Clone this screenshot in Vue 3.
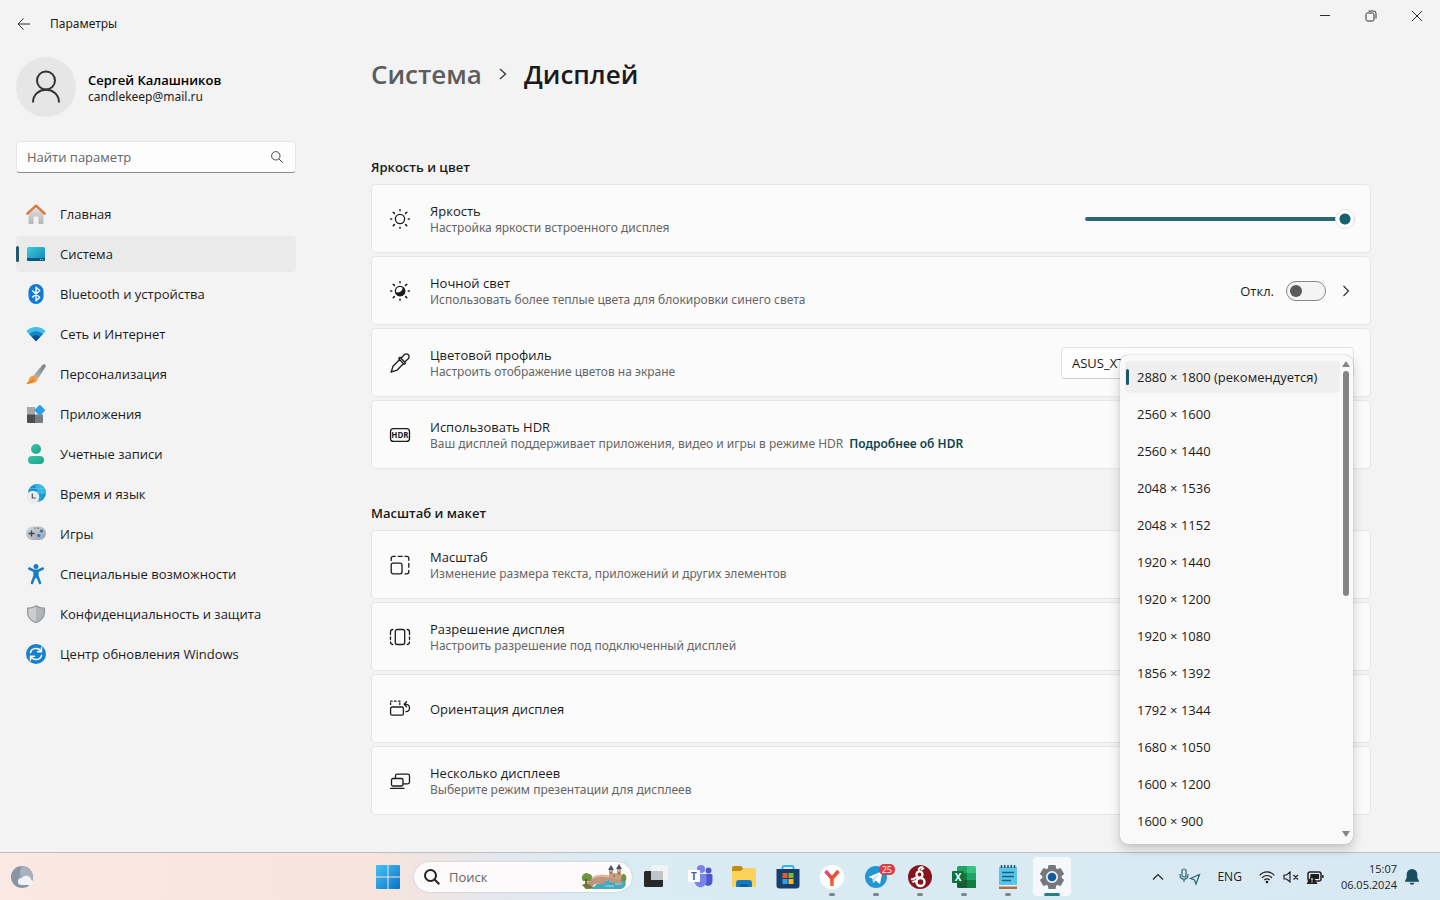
<script setup>
import { ref } from 'vue'

const query = ref('')
const taskQuery = ref('')
const brightness = ref(100)
const nightLight = ref(false)
const profile = ref('ASUS_XT')
const resolution = ref('2880 × 1800 (рекомендуется)')

const resolutions = [
  '2880 × 1800 (рекомендуется)', '2560 × 1600', '2560 × 1440', '2048 × 1536', '2048 × 1152',
  '1920 × 1440', '1920 × 1200', '1920 × 1080', '1856 × 1392', '1792 × 1344', '1680 × 1050',
  '1600 × 1200', '1600 × 900',
]

const nav = [
  { label: 'Главная', icon: `<defs><linearGradient id="hm" x2="0" y2="1"><stop stop-color="#e4e4e4"/><stop offset="1" stop-color="#b5b5b5"/></linearGradient></defs><path d="M2.500 8.500 10 2l7.500 6.500V19a1 1 0 0 1-1 1h-4v-6.500a1 1 0 0 0-1-1h-3a1 1 0 0 0-1 1V20h-4a1 1 0 0 1-1-1z" fill="url(#hm)"/><path d="M1.300 9.700 10 1.700l8.700 8" fill="none" stroke="#d9783a" stroke-width="2.400" stroke-linecap="round" stroke-linejoin="round"/>` },
  { label: 'Система', active: true, icon: `<defs><linearGradient id="sy" x2="1" y2="1"><stop stop-color="#3ccbdc"/><stop offset="1" stop-color="#1583b8"/></linearGradient></defs><rect x="1" y="3" width="18" height="14" rx="1.500" fill="url(#sy)"/><path d="M1 14h18v1.500a1.500 1.500 0 0 1-1.500 1.500h-15A1.500 1.500 0 0 1 1 15.500z" fill="#0c5683"/><path d="M14 15.500h1m1 0h1" stroke="#8fdcf0"/>` },
  { label: 'Bluetooth и устройства', icon: `<rect x="2.500" y="0" width="15" height="20" rx="7.500" fill="#1079dc"/><path d="m6.300 6.500 7.400 7-3.700 3.300V3.200l3.700 3.300-7.400 7" fill="none" stroke="#fff" stroke-width="1.400" stroke-linejoin="round"/>` },
  { label: 'Сеть и Интернет', icon: `<path d="M.300 7.300C5.500 1.500 14.500 1.500 19.700 7.300L10 17.300z" fill="#43bfe9"/><path d="M3.200 10.300c3.700-4 9.900-4 13.600 0L10 17.300z" fill="#1582c8"/><path d="M6 13.100c2-2.400 6-2.400 8 0l-4 4.200z" fill="#0c4f96"/>` },
  { label: 'Персонализация', icon: `<defs><linearGradient id="br" x1="1" x2="0" y2="1"><stop stop-color="#767b80"/><stop offset="1" stop-color="#b6bbc0"/></linearGradient></defs><path d="M7.500 11.500 16.500.900c1.500-1.600 4 .2 3 2.200L12 14.800z" fill="url(#br)"/><path d="M11.500 14.800c-.5 4-4.500 5-10.700 4.600 2-1 1.500-3.100 2.600-5.200 1.200-2.400 4-3.100 5.800-2z" fill="#f19a38"/><path d="M.800 19.400c3-.3 5.500-1.800 6.200-4" fill="none" stroke="#dd7321" stroke-width="1.200"/>` },
  { label: 'Приложения', icon: `<path d="M1 3h8v8H1z" fill="#a4a6a8"/><path d="M1 10.500h8V19H2a1 1 0 0 1-1-1z" fill="#4c4e50"/><path d="M9 10.500h8V18a1 1 0 0 1-1 1H9z" fill="#797c7f"/><rect x="9.800" y="2.200" width="8" height="8" rx="1" fill="#2b9ee6" transform="rotate(45 13.800 6.200)"/>` },
  { label: 'Учетные записи', icon: `<defs><linearGradient id="ac" x2="1" y2="1"><stop stop-color="#39c6a2"/><stop offset="1" stop-color="#1ba18c"/></linearGradient></defs><circle cx="10" cy="5" r="5" fill="url(#ac)"/><rect x="2" y="12" width="16" height="8" rx="4" fill="url(#ac)"/>` },
  { label: 'Время и язык', icon: `<circle cx="11" cy="9" r="9" fill="#1592cf"/><path d="M11 0c5 0 9 4 9 9h-9c0-4-1-6-3-8.500z" fill="#36b3df"/><path d="M4 4.500h15M3 9h17M13 .500c4 5 4 12 0 17" stroke="#6bd0ed" fill="none" stroke-width=".500"/><circle cx="6.800" cy="13.200" r="6.500" fill="#e9ebed"/><path d="M6.300 9.500v4.500h3.500" fill="none" stroke="#50565c" stroke-width="1.200"/>` },
  { label: 'Игры', icon: `<defs><linearGradient id="gm" x2="1" y2="1"><stop stop-color="#d6d9df"/><stop offset="1" stop-color="#9ba1ad"/></linearGradient></defs><rect x="0" y="2.500" width="20" height="13.500" rx="6.500" fill="url(#gm)"/><path d="M5.500 6.500v6M2.500 9.500h6" stroke="#3e4349" stroke-width="1.300"/><circle cx="15.500" cy="7" r="1.600" fill="#2973b9"/><circle cx="12.800" cy="11.500" r="1.600" fill="#2973b9"/><path d="M8.500 4.200h1m2 0h1" stroke="#444" stroke-width="1.200"/>` },
  { label: 'Специальные возможности', icon: `<circle cx="10" cy="2.500" r="2.500" fill="#197dc5"/><path d="M3.200 4.500 8 6.800h4l4.800-2.300M8.600 7v5L6 19M11.400 7v5l2.600 7M10 7v6" fill="none" stroke="#197dc5" stroke-width="2.500" stroke-linecap="round" stroke-linejoin="round"/>` },
  { label: 'Конфиденциальность и защита', icon: `<path d="M10 1c3 2 6 2.500 9 2.500v5c0 5-3.800 9-9 10.800C4.800 17.500 1 13.500 1 8.500v-5C4 3.500 7 3 10 1z" fill="#94989c"/><path d="M10 2.500c2.500 1.500 5 2 7.700 2.200v4c0 4-3 7.400-7.700 9.100z" fill="#b2b5b8"/><path d="M10 2.500C7.500 4 5 4.500 2.300 4.700v4c0 4 3 7.400 7.700 9.100z" fill="#cbcdcf"/>` },
  { label: 'Центр обновления Windows', icon: `<circle cx="10" cy="10" r="10" fill="#1780cd"/><path d="M4.500 8.700C5.500 3.700 12.800 3 15 7.500M15.500 3.800v4h-4M15.500 11.300C14.500 16.300 7.200 17 5 12.500m-.500 3.700v-4h4" fill="none" stroke="#fff" stroke-width="1.500" stroke-linecap="round" stroke-linejoin="round"/>` },
]

const rays = '<path d="M10 .700v1M10 18.300v1M.700 10h1M18.300 10h1M3.200 3.200l1.200 1.200M15.600 15.600l1.200 1.200M3.200 16.800l1.200-1.200M15.600 4.400l1.200-1.200" stroke-width="1.500"/>'
const colorRows = [
  { key: 'brightness', title: 'Яркость', text: 'Настройка яркости встроенного дисплея', icon: `<circle cx="10" cy="10" r="4.600"/>${rays}` },
  { key: 'night', title: 'Ночной свет', text: 'Использовать более теплые цвета для блокировки синего света', icon: `<circle cx="10" cy="10" r="4.600"/>${rays}<path d="M13.300 6.700A4.600 4.600 0 1 1 6 12c4 .500 7-1.500 7.300-5.300z" fill="#1b1b1b"/>` },
  { key: 'profile', title: 'Цветовой профиль', text: 'Настроить отображение цветов на экране', icon: `<path d="m11 5.300 3-3.300c3-3 7 1 4 4l-3.300 3M10 4.300l5.700 5.700-1.500 1.200-5.500-5.500zM9.700 6.500 3 13.200 1.500 18 1 19.200l1.200-.5L7 17.200l6.500-6.700"/>` },
  { key: 'hdr', title: 'Использовать HDR', text: 'Ваш дисплей поддерживает приложения, видео и игры в режиме HDR', icon: `<rect x=".500" y="3.600" width="19" height="12.800" rx="3"/><text x="10" y="13" text-anchor="middle" font-family="Open Sans, sans-serif" font-size="8" font-weight="700" fill="#1b1b1b" stroke="none">HDR</text>` },
]
const layoutRows = [
  { key: 'scale', title: 'Масштаб', text: 'Изменение размера текста, приложений и других элементов', icon: `<rect x="1.200" y="8.200" width="10.800" height="10.600" rx="2"/><path d="M1.200 5.500V3.300a2 2 0 0 1 2-2h2M8.200 1.300h4M15 1.300h1.800a2 2 0 0 1 2 2v2M18.800 8.300v4M18.800 15.500v1.300a2 2 0 0 1-2 2H15"/>` },
  { key: 'resolution', title: 'Разрешение дисплея', text: 'Настроить разрешение под подключенный дисплей', icon: `<rect x="5.300" y="2.500" width="9.400" height="15" rx="2"/><path d="M2.800 2.500a2.500 2.500 0 0 0-2.300 2.500v2.500M.500 10v2.500M2.800 17.500A2.500 2.500 0 0 1 .500 15M17.200 2.500A2.500 2.500 0 0 1 19.500 5v2.500M19.500 10v2.500M17.200 17.500a2.500 2.500 0 0 0 2.300-2.500"/>` },
  { key: 'orientation', title: 'Ориентация дисплея', text: '', icon: `<rect x=".600" y="8" width="12.800" height="8.200" rx="1.500"/><path d="M.600 5.500V4M.600 2.200h1.500M4.500 2.200H6M8.500 2.200h1.500M9.800 4v1.500M14.500 5.200h1c5.500.500 5 7 .5 7.500M16.500 2.800 14.200 5.200l2.300 2.500"/>` },
  { key: 'multi', title: 'Несколько дисплеев', text: 'Выберите режим презентации для дисплеев', icon: `<rect x="1.500" y="7.500" width="11.500" height="7.500" rx="1.500"/><path d="M5.500 7V5a1.800 1.800 0 0 1 1.800-1.800h10.400A1.800 1.800 0 0 1 19.500 5v6a1.800 1.800 0 0 1-1.800 1.800h-4.500M.500 17.300h13.500"/>` },
]

const apps = [
  { name: 'Представление задач', icon: `<rect x="0" y="6" width="19" height="16" rx="1.500" fill="#26282a"/><rect x="7" y="0" width="17" height="15" rx="1.500" fill="#f2f4f6" opacity=".880"/><path d="M7 6h12v9H7z" fill="#c2c5c8"/>` },
  { name: 'Teams', icon: `<circle cx="13" cy="4" r="4" fill="#7b83eb"/><circle cx="20.500" cy="5.500" r="3" fill="#5059c9"/><path d="M16 9h7a1.500 1.500 0 0 1 1.500 1.500V16c0 5-5 6.500-8 3z" fill="#5059c9"/><path d="M6.500 9h12v6.500c0 9-12 9-12 0z" fill="#7b83eb"/><rect x="0" y="5" width="12" height="12" rx="1" fill="#fff"/><text x="6" y="14.500" text-anchor="middle" font-family="Open Sans, sans-serif" font-size="10" font-weight="700" fill="#4b53bc">T</text>` },
  { name: 'Проводник', icon: `<path d="M0 3a2 2 0 0 1 2-2h7l3 3h10v6H0z" fill="#c68b12"/><path d="M0 6h9l2.500-3H22.500A1.500 1.500 0 0 1 24 4.500V21a1 1 0 0 1-1 1H1a1 1 0 0 1-1-1z" fill="#fbd35c"/><path d="M4 22v-4a3 3 0 0 1 3-3h10a3 3 0 0 1 3 3v4z" fill="#1779c1"/><path d="M8 19h8v3H8z" fill="#0f5f9f"/>` },
  { name: 'Microsoft Store', icon: `<path d="M6.500 5V2.500A1.500 1.500 0 0 1 8 1h8a1.500 1.500 0 0 1 1.500 1.500V5" fill="none" stroke="#38b6ed" stroke-width="2"/><path d="M.500 4h23v16.500a3 3 0 0 1-3 3h-17a3 3 0 0 1-3-3z" fill="#173e70"/><path d="M6.500 8h5v5h-5z" fill="#f2542d"/><path d="M12.500 8h5v5h-5z" fill="#7fba28"/><path d="M6.500 14h5v5h-5z" fill="#26a5e8"/><path d="M12.500 14h5v5h-5z" fill="#fdbb2c"/>` },
  { name: 'Яндекс', open: true, icon: `<defs><linearGradient id="ya" x2="1" y2="1"><stop stop-color="#e34691"/><stop offset=".450" stop-color="#e84b35"/><stop offset="1" stop-color="#f58a2b"/></linearGradient></defs><circle cx="12" cy="12" r="12" fill="#fff"/><path d="m5.500 6 6.500 7.500L18.500 6M12 13v8" fill="none" stroke="url(#ya)" stroke-width="3.600"/>` },
  { name: 'Telegram', open: true, badge: '25', icon: `<circle cx="12" cy="12" r="11" fill="#2397d4"/><path d="m4.500 12 14-6-2.500 13-4.500-3.500-2.500 2.500-.500-4.500z" fill="#fff"/><path d="m9 13.500 7-5.300-5 6-2 3.300z" fill="#b9d9ed"/>` },
  { name: 'Вики', open: true, icon: `<circle cx="12" cy="12" r="12" fill="#85161f"/><circle cx="11.500" cy="9.500" r="3" fill="none" stroke="#fff" stroke-width="2.200"/><circle cx="12.500" cy="17" r="4" fill="none" stroke="#fff" stroke-width="2.400"/><path d="M12 6.500c-3-2 0-5 3-4M13 5l3-2M3 14c3 1 5-1 7-3M4.500 17.500c1.500-2 3.500-1.500 4-.500" fill="none" stroke="#fff" stroke-width="2"/>` },
  { name: 'Excel', open: true, icon: `<path d="M5 2.500A1.500 1.500 0 0 1 6.500 1H15v8H5z" fill="#21a366"/><path d="M15 1h7.500A1.500 1.500 0 0 1 24 2.500V9h-9z" fill="#33c481"/><path d="M5 8h10v7H5z" fill="#107c41"/><path d="M15 8h9v7h-9z" fill="#21a366"/><path d="M5 15h19v6.500a1.500 1.500 0 0 1-1.500 1.500h-16A1.500 1.500 0 0 1 5 21.500z" fill="#185c37"/><path d="M15 15h9v6.500a1.500 1.500 0 0 1-1.500 1.500H15z" fill="#107c41"/><rect x="0" y="6" width="12" height="12" rx="1" fill="#0e7039"/><text x="6" y="15.500" text-anchor="middle" font-family="Open Sans, sans-serif" font-size="10" font-weight="700" fill="#fff">X</text>` },
  { name: 'Блокнот', open: true, icon: `<path d="M3 2h18v18H3z" fill="#5cc3e6"/><path d="M3 21h18v3H3z" fill="#b06d48"/><path d="M3 20h18v1.500H3z" fill="#eaf4f7"/><path d="M5.500 0v3M8.700 0v3M12 0v3M15.300 0v3M18.500 0v3" stroke="#174f6c" stroke-width="1.500"/><path d="M6 7.500h12M6 11.500h12M6 15.500h9" stroke="#126390" stroke-width="1.300"/>` },
  { name: 'Параметры', open: true, active: true, icon: `<g fill="#75797d"><circle cx="12" cy="12" r="9.500"/><path d="M8.500 0h7l1 5h-9zM8.500 24h7l1-5h-9z"/><path d="M8.500 0h7l1 5h-9zM8.500 24h7l1-5h-9z" transform="rotate(60 12 12)"/><path d="M8.500 0h7l1 5h-9zM8.500 24h7l1-5h-9z" transform="rotate(120 12 12)"/></g><circle cx="12" cy="12" r="6" fill="#eceff1"/><circle cx="12" cy="12" r="4.300" fill="#125b9d"/>` },
]
</script>

<template>
  <div class="desktop">
    <header class="titlebar">
      <button class="back" aria-label="Назад">
        <svg width="14" height="14" viewBox="0 0 14 14"><path d="M13 7H1.500M6.500 1.500 1 7l5.500 5.500" /></svg>
      </button>
      <span class="app-title">Параметры</span>
      <div class="window-buttons">
        <button aria-label="Свернуть"><svg width="12" height="12" viewBox="0 0 12 12"><path d="M1 5.500h10" /></svg></button>
        <button aria-label="Свернуть в окно"><svg width="12" height="12" viewBox="0 0 12 12"><rect x="1" y="3" width="8" height="8" rx="1.500" /><path d="M3.500 1H8.500A2.500 2.500 0 0 1 11 3.500V8.500" /></svg></button>
        <button aria-label="Закрыть"><svg width="12" height="12" viewBox="0 0 12 12"><path d="m1 1 10 10M11 1 1 11" /></svg></button>
      </div>
    </header>

    <div class="body">
      <aside class="sidebar">
        <button class="account">
          <span class="avatar">
            <svg width="32" height="32" viewBox="0 0 32 32"><circle cx="16" cy="9.500" r="9" /><path d="M3 31.500c0-17 26-17 26 0" /></svg>
          </span>
          <span class="account-text"><strong>Сергей Калашников</strong><span>candlekeep@mail.ru</span></span>
        </button>
        <label class="search">
          <input v-model="query" type="text" placeholder="Найти параметр" aria-label="Найти параметр">
          <svg width="12" height="12" viewBox="0 0 12 12"><circle cx="4.800" cy="4.800" r="4.200" /><path d="m8 8 3.700 3.700" /></svg>
        </label>
        <nav>
          <a v-for="item in nav" :key="item.label" href="#" class="nav-item" :class="{ active: item.active }">
            <svg width="20" height="20" viewBox="0 0 20 20" v-html="item.icon" />
            <span>{{ item.label }}</span>
          </a>
        </nav>
      </aside>

      <main>
        <h1>
          <a href="#">Система</a>
          <svg width="8" height="14" viewBox="0 0 8 14"><path d="m1 2 5.500 5L1 12" /></svg>
          <span>Дисплей</span>
        </h1>

        <section>
          <h2>Яркость и цвет</h2>
          <div v-for="row in colorRows" :key="row.key" class="card">
            <svg class="line-icon" width="20" height="20" viewBox="0 0 20 20" v-html="row.icon" />
            <div class="card-text">
              <div class="card-title">{{ row.title }}</div>
              <div class="card-note">{{ row.text }}<a v-if="row.key === 'hdr'" href="#">Подробнее об HDR</a></div>
            </div>
            <input v-if="row.key === 'brightness'" v-model="brightness" class="slider" type="range" min="0" max="100" aria-label="Яркость">
            <template v-else-if="row.key === 'night'">
              <label class="toggle">Откл.<input v-model="nightLight" type="checkbox"></label>
              <button class="expand" aria-label="Ночной свет: подробнее">
                <svg width="8" height="12" viewBox="0 0 8 12"><path d="m1.500 1 5 5-5 5" /></svg>
              </button>
            </template>
            <select v-else-if="row.key === 'profile'" v-model="profile" class="combo" aria-label="Цветовой профиль">
              <option>ASUS_XT</option>
            </select>
          </div>
        </section>

        <section>
          <h2>Масштаб и макет</h2>
          <div v-for="row in layoutRows" :key="row.key" class="card">
            <svg class="line-icon" width="20" height="20" viewBox="0 0 20 20" v-html="row.icon" />
            <div class="card-text">
              <div class="card-title">{{ row.title }}</div>
              <div v-if="row.text" class="card-note">{{ row.text }}</div>
            </div>
            <div v-if="row.key === 'resolution'" class="menu">
              <div class="options" role="listbox" aria-label="Разрешение дисплея">
                <button
                  v-for="item in resolutions" :key="item" role="option" class="option"
                  :class="{ selected: item === resolution }" :aria-selected="item === resolution" @click="resolution = item"
                >{{ item }}</button>
              </div>
              <div class="scrollbar">
                <svg width="8" height="6" viewBox="0 0 8 6"><path d="M4 0l4 6H0z" /></svg>
                <div class="rail"><div class="thumb" /></div>
                <svg width="8" height="6" viewBox="0 0 8 6"><path d="M0 0h8L4 6z" /></svg>
              </div>
            </div>
          </div>
        </section>
      </main>
    </div>

    <footer class="taskbar">
      <button class="weather" aria-label="Погода">
        <svg width="24" height="24" viewBox="0 0 24 24">
          <circle cx="12" cy="12" r="11" fill="#8a94a3" /><path d="M12 1a11 11 0 0 1 9 17c-9 0-14-8-9-17z" fill="#a9b1bd" />
          <path d="M11 20a3.500 3.500 0 0 1 1-7 5 5 0 0 1 9 1.500 3 3 0 0 1 0 5.500z" fill="#f1f3f6" />
        </svg>
      </button>
      <div class="task-center">
        <button class="task" aria-label="Пуск">
          <svg width="24" height="24" viewBox="0 0 24 24">
            <defs><linearGradient id="win" x2="1" y2="1"><stop stop-color="#45c3f5" /><stop offset="1" stop-color="#0c72c6" /></linearGradient></defs>
            <path d="M1 0h10.500v11.500H0V1a1 1 0 0 1 1-1zM12.500 0h10.500a1 1 0 0 1 1 1v10.500H12.500zM0 12.500h11.500V24H1a1 1 0 0 1-1-1zM12.500 12.500H24V23a1 1 0 0 1-1 1H12.500z" fill="url(#win)" />
          </svg>
        </button>
        <label class="task-search">
          <svg class="magnifier" width="16" height="16" viewBox="0 0 16 16"><circle cx="6.500" cy="6.500" r="5.500" /><path d="m10.500 10.500 4.800 4.800" /></svg>
          <input v-model="taskQuery" type="text" placeholder="Поиск" aria-label="Поиск">
          <svg width="46" height="26" viewBox="0 0 46 26">
            <path d="M16 20c8-5 22-6 28-3 2 3 0 7-4 8H10z" fill="#47a8bd" />
            <path d="M28 9h12l3 9H28z" fill="#c49c7d" />
            <path d="M3 22C9 12 17 10 24 11l16 2v6h-9c-1-4-7-4-8 1-4 1-7-2-11 2l-2 3H5z" fill="#bd967d" />
            <path d="M6 18c6-6 12-7 18-6l15 2" fill="none" stroke="#e0bd9e" stroke-width="2" />
            <path d="M28 6h4v8h-4zM36 5h4v11h-4zM32 9h4v6h-4z" fill="#c7a384" />
            <path d="m27 6 3-5 3 5zM35 5l3-5 3 5z" fill="#46536c" />
            <path d="M33 11v2M38 8v3M30 8v2" stroke="#74523f" />
            <path d="M1 15c-1-4 4-8 7-5 4 0 4 6 1 7H2zM40 17c0-3 1-8 3-7 3 1 3 6 1 8z" fill="#6f9440" />
            <path d="M5 15v8" stroke="#614731" stroke-width="1.500" /><path d="M1 21c5-3 8 0 12 3l-8 1z" fill="#6e7a38" />
            <path d="M24 22h9M34 20h7" stroke="#a8dce4" />
          </svg>
        </label>
        <button v-for="app in apps" :key="app.name" class="task" :class="{ open: app.open, current: app.active }" :aria-label="app.name">
          <svg width="24" height="24" viewBox="0 0 24 24" v-html="app.icon" />
          <span v-if="app.badge" class="badge">{{ app.badge }}</span>
        </button>
      </div>
      <div class="tray">
        <button class="tray-chevron" aria-label="Скрытые значки"><svg width="12" height="8" viewBox="0 0 12 8"><path d="m1 6.500 5-5 5 5" /></svg></button>
        <button class="privacy" aria-label="Микрофон и расположение">
          <svg width="22" height="16" viewBox="0 0 22 16"><rect x="3" y="0" width="4" height="8" rx="2" /><path d="M1 5c0 7 8 7 8 0M5 10.500v2.500M20.500 5.500l-9 4 4 1.500 1.500 4z" /></svg>
        </button>
        <button class="lang">ENG</button>
        <button class="status" aria-label="Сеть, звук и батарея">
          <svg width="16" height="14" viewBox="0 0 16 14"><path d="M.700 5.300c4-4.500 10.600-4.500 14.600 0M3 7.800c3-3 7-3 10 0M5.300 10c1.800-1.600 3.600-1.600 5.400 0" /><circle cx="8" cy="12" r="1.300" fill="#1b1b1b" stroke="none" /></svg>
          <svg width="16" height="14" viewBox="0 0 16 14"><path d="M1 5v4h2.500L7 12V2L3.500 5zM10.500 5l4.500 4.500M15 5l-4.500 4.500" /></svg>
          <svg width="17" height="16" viewBox="0 0 17 16">
            <rect x="1" y="3" width="13" height="9" rx="2" stroke-width="1.500" /><path d="M4 5.500h7.500v4H4z" fill="#1b1b1b" /><path d="M15.800 6v3" stroke-width="1.500" />
            <path d="m5 6.500-4.500 8h9z" fill="#1b1b1b" /><path d="M5 9v2.500M5 12.500v1" stroke="#fff" />
          </svg>
        </button>
        <button class="clock"><span>15:07</span><span>06.05.2024</span></button>
        <button class="bell" aria-label="Уведомления">
          <svg width="14" height="16" viewBox="0 0 14 16"><path d="M7 0a5.300 5.300 0 0 0-5.300 5.300v3.500L0 12v.800h14V12l-1.700-3.200V5.300A5.300 5.300 0 0 0 7 0zM4.500 13.800a2.600 2.600 0 0 0 5 0z" /></svg>
        </button>
      </div>
    </footer>
  </div>
</template>

<style>
body { margin: 0; background: #f3f3f3; }
</style>

<style scoped>
.desktop {
  min-height: 100vh;
  display: flex;
  flex-direction: column;
  background: #f3f3f3;
  color: #1b1b1b;
  font: 13px/18px "Open Sans", "Noto Sans", sans-serif;
}
.desktop *, .desktop *::before { box-sizing: border-box; }
button, input, select { font: inherit; color: inherit; }
button { background: none; border: 0; padding: 0; }
a { color: inherit; text-decoration: none; }
svg { flex: none; display: block; overflow: visible; }

.titlebar { display: flex; height: 48px; align-items: center; padding-left: 12px; }
.back { width: 24px; height: 24px; display: grid; place-items: center; }
.titlebar svg { fill: none; stroke: #303030; stroke-width: 1; }
.app-title { margin-left: 14px; font: 12px/18px "Noto Sans", sans-serif; }
.window-buttons { display: flex; align-self: flex-start; margin-left: auto; }
.window-buttons button { width: 46px; height: 32px; display: grid; place-items: center; }

.body { flex: 1; display: flex; }
.sidebar { flex: none; width: 296px; padding: 9px 0 0 16px; }
.account { display: flex; align-items: center; gap: 12px; text-align: left; }
.avatar { width: 60px; height: 60px; border-radius: 50%; background: #e6e6e6; display: grid; place-items: center; }
.avatar svg { fill: none; stroke: #333; stroke-width: 2; }
.account-text { display: flex; flex-direction: column; padding-top: 1px; font: 12px/16px "Noto Sans", sans-serif; }
.account-text strong { font: 600 13px/18px "Open Sans", "Noto Sans", sans-serif; color: #000; }
.search {
  display: flex; align-items: center; height: 32px; margin-top: 24px; padding: 0 12px 0 10px;
  background: #fdfdfd; border: 1px solid #e6e6e6; border-bottom-color: #8a8a8a; border-radius: 4px;
}
.search input, .task-search input { flex: 1; min-width: 0; padding: 0; border: 0; outline: 0; background: none; }
.search input::placeholder, .task-search input::placeholder { color: #666; opacity: 1; }
.search svg { fill: none; stroke: #444; }
nav { display: flex; flex-direction: column; gap: 4px; margin-top: 23px; }
.nav-item { position: relative; display: flex; align-items: center; gap: 14px; height: 36px; padding-left: 10px; border-radius: 4px; }
.nav-item.active { background: #eaeaea; }
.nav-item.active::before { content: ""; position: absolute; left: 0; top: 10px; width: 3px; height: 16px; border-radius: 2px; background: #215b6b; }

main { flex: 1; min-width: 0; padding: 9px 69px 36px 75px; }
h1 { display: flex; align-items: center; gap: 17px; height: 34px; margin: 0 0 67px; font-size: 26px; line-height: 34px; font-weight: 600; }
h1 a { color: #5c5c5c; }
h1 svg { fill: none; stroke: #444; stroke-width: 1.500; }
section + section { margin-top: 35px; }
section { display: flex; flex-direction: column; gap: 3px; }
h2 { margin: 0 0 5px; font-size: 13px; line-height: 18px; font-weight: 600; }
.card {
  position: relative; display: flex; align-items: center; min-height: 69px; padding: 0 14px 0 18px;
  background: #fbfbfb; border: 1px solid #e7e7e7; border-radius: 4px;
}
.line-icon { margin-right: 20px; fill: none; stroke: #1b1b1b; stroke-width: 1.300; stroke-linecap: round; stroke-linejoin: round; }
.card-text { flex: 1; }
.card-note { font: 12px/16px "Noto Sans", sans-serif; color: #666; }
.card-note a { margin-left: 6px; color: #0f4351; font-weight: 600; }

.slider { appearance: none; width: 270px; height: 20px; margin: 0 1px 0 0; background: none; }
.slider::-webkit-slider-runnable-track { height: 4px; border-radius: 2px; background: #2c6773; }
.slider::-webkit-slider-thumb {
  appearance: none; width: 20px; height: 20px; margin-top: -8px; border-radius: 50%; border: 1px solid #e4e4e4;
  background: radial-gradient(circle, #17616f 5px, #fff 6px);
}
.toggle { display: flex; align-items: center; gap: 12px; }
.toggle input {
  appearance: none; width: 40px; height: 20px; margin: 0; padding: 3px; border: 1px solid #868686;
  border-radius: 10px; background: #f4f4f4;
}
.toggle input::before { content: ""; display: block; width: 12px; height: 12px; border-radius: 50%; background: #5b5b5b; }
.toggle input:checked::before { margin-left: 20px; }
.expand { width: 20px; height: 20px; margin-left: 10px; display: grid; place-items: center; }
.expand svg { fill: none; stroke: #333; stroke-width: 1.200; }
.combo {
  appearance: none; width: 293px; height: 32px; padding: 0 10px; margin-right: 2px;
  border: 1px solid #e3e3e3; border-bottom-color: #d0d0d0; border-radius: 4px; background: #fefefe;
}

.menu {
  position: absolute; z-index: 2; right: 17px; top: -248px; width: 233px; display: flex;
  padding: 6px 1px 7px 5px; background: #f9f9f9; border-radius: 8px; box-shadow: 0 0 1px #999, 0 5px 12px #0003;
}
.options { flex: 1; display: flex; flex-direction: column; gap: 5px; }
.option { position: relative; height: 32px; padding: 0 12px; border-radius: 4px; text-align: left; white-space: nowrap; }
.option.selected { background: #efefef; }
.option.selected::before { content: ""; position: absolute; left: 1px; top: 8px; width: 3px; height: 16px; border-radius: 2px; background: #1b5868; }
.scrollbar { width: 12px; display: flex; flex-direction: column; align-items: center; fill: #858585; }
.rail { flex: 1; padding-top: 4px; }
.thumb { width: 6px; height: 49%; border-radius: 3px; background: #858585; }

.taskbar {
  height: 48px; display: grid; grid-template-columns: 1fr auto 1fr; align-items: center; border-top: 1px solid #b9bec2;
  background: linear-gradient(90deg, #fae9e2 0, #f7e4dc 26%, #e5e7ec 34%, #dbebf3 42%, #d9e9f3 100%);
}
.weather { justify-self: start; margin-left: 10px; }
.task-center { display: flex; align-items: center; }
.task { position: relative; width: 44px; height: 46px; display: grid; place-items: center; }
.task.current::before { content: ""; position: absolute; inset: 3px 3px 4px; border-radius: 4px; background: #f5f9fc; }
.task svg { position: relative; }
.task.open::after { content: ""; position: absolute; bottom: 4px; left: 19px; width: 6px; height: 3px; border-radius: 2px; background: #7b868b; }
.task.current::after { left: 14px; width: 16px; background: #2b7d86; }
.badge { position: absolute; top: 10px; right: 3px; padding: 0 3px; border-radius: 5px; background: #df3c42; color: #fff; font-size: 9px; line-height: 11px; }
.task-search {
  display: flex; align-items: center; width: 218px; height: 30px; margin: 0 2px 0 4px; padding: 0 5px 0 10px;
  border-radius: 15px; background: #fcfafb; box-shadow: 0 0 2px #0003;
}
.task-search input { margin-left: 9px; font-size: 13px; }
.magnifier { fill: none; stroke: #222; stroke-width: 2; }
.tray { display: flex; align-items: center; justify-self: end; padding-right: 21px; font-size: 12px; color: #222; }
.tray svg { fill: none; stroke: #222; stroke-width: 1.200; }
.privacy { margin-left: 15px; }
.tray .privacy svg { stroke: #2c6570; }
.lang { margin-left: 16px; }
.status { display: flex; align-items: center; gap: 8px; margin-left: 17px; }
.clock { display: flex; flex-direction: column; align-items: flex-end; margin-left: 17px; font-size: 11px; line-height: 16px; }
.bell { margin-left: 8px; }
.tray .bell svg { fill: #164e59; stroke: none; }
</style>
